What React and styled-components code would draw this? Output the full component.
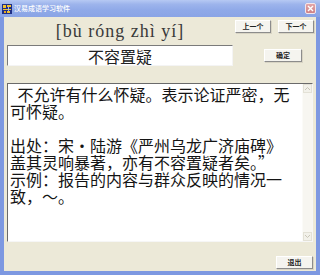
import React from 'react';
import styled, { createGlobalStyle } from 'styled-components';

const Global = createGlobalStyle`
  html, body { margin: 0; padding: 0; background: #ffffff; }
  body { width: 320px; height: 275px; overflow: hidden; }
`;

const Win = styled.div`
  width: 320px;
  height: 275px;
  box-sizing: border-box;
  display: flex;
  flex-direction: column;
  background: #7d98e1;
  font-family: "Noto Sans CJK SC", "Noto Sans", sans-serif;
`;

const TitleBar = styled.div`
  height: 17px;
  flex: none;
  display: flex;
  align-items: center;
  gap: 2px;
  padding: 0 4px 0 2px;
  background: linear-gradient(to bottom, #b6c9f3 0%, #9db4ec 25%, #8fa9e8 60%, #8aa4e5 100%);
`;

const TitleText = styled.span`
  flex: 1;
  color: #ffffff;
  font-size: 7px;
  line-height: 9px;
  font-weight: 500;
`;

const CloseBtn = styled.div`
  width: 11px;
  height: 11px;
  box-sizing: border-box;
  border: 1px solid #f4e6ea;
  border-radius: 2px;
  background: linear-gradient(to bottom, #e2a5a8, #cf8287);
  display: flex;
  align-items: center;
  justify-content: center;
`;

const Body = styled.div`
  flex: 1;
  margin: 0 4px 4px 4px;
  background: #ece9d8;
  display: flex;
  flex-direction: column;
  padding: 3px 3px 2px 3px;
`;

const Top = styled.div`
  display: grid;
  grid-template-columns: 226px 1fr;
  column-gap: 2px;
`;

const LeftCol = styled.div`
  display: flex;
  flex-direction: column;
  gap: 3px;
`;

const Pinyin = styled.div`
  height: 22px;
  line-height: 22px;
  text-align: center;
  font-family: "Liberation Serif", "DejaVu Serif", serif;
  font-size: 18px;
  letter-spacing: 1px;
  color: #3a3a3a;
`;

const WordBox = styled.div`
  height: 21px;
  box-sizing: border-box;
  background: #ffffff;
  border: 1px solid;
  border-color: #7a7a7a #f4f4f4 #f4f4f4 #7a7a7a;
  display: flex;
  align-items: center;
  justify-content: center;
  font-size: 16px;
  color: #222222;
  line-height: 1;
`;

const RightCol = styled.div`
  display: flex;
  flex-direction: column;
  gap: 16px;
`;

const BtnRow = styled.div`
  display: flex;
  gap: 7px;
`;

const Button = styled.div`
  width: ${p => p.$w || 36}px;
  height: 13px;
  box-sizing: border-box;
  margin-left: ${p => p.$ml || 0}px;
  background: #f5f4ef;
  border: 1px solid;
  border-color: #ffffff #8c8c8c #8c8c8c #ffffff;
  box-shadow: 1px 1px 0 #d8d4c4;
  display: flex;
  align-items: center;
  justify-content: center;
  font-size: 7px;
  line-height: 1;
  color: #222222;
  font-weight: 700;
`;

const TextBox = styled.div`
  margin-top: 17px;
  height: 159px;
  box-sizing: border-box;
  display: flex;
  background: #ffffff;
  border: 1px solid;
  border-color: #6a6a6a #f6f6f6 #f6f6f6 #6a6a6a;
`;

const Content = styled.div`
  flex: 1;
  min-width: 0;
  padding: 2px 0 0 2px;
  font-size: 16px;
  line-height: 17px;
  color: #141414;
`;

const Line = styled.div`
  min-height: 17px;
  white-space: pre;
  word-spacing: 4px;
`;

const Dot = styled.span`
  font-feature-settings: "fwid" 1;
`;

const ScrollBar = styled.div`
  width: 9px;
  flex: none;
  display: flex;
  flex-direction: column;
  background: #f7f6f1;
  border-left: 1px solid #fbfbf8;
`;

const Arrow = styled.div`
  height: 9px;
  box-sizing: border-box;
  border: 1px solid #e3e1d6;
  background: #f2f1ea;
  display: flex;
  align-items: center;
  justify-content: center;
`;

const Track = styled.div`
  flex: 1;
`;

const Footer = styled.div`
  margin-top: 14px;
  display: flex;
  justify-content: flex-end;
`;

const AppIcon = () => (
  <svg width="10" height="10" viewBox="0 0 10 10">
    <rect x="0" y="0" width="10" height="10" fill="#1f2f86" />
    <rect x="1" y="1" width="3" height="3" fill="#f2c230" />
    <rect x="5" y="1" width="4" height="2" fill="#f2c230" />
    <rect x="1" y="5" width="8" height="1" fill="#f2c230" />
    <rect x="2" y="7" width="2" height="2" fill="#e8a820" />
    <rect x="5" y="7" width="3" height="2" fill="#f2c230" />
    <rect x="6" y="3" width="1" height="4" fill="#9fb3f0" />
  </svg>
);

const CloseX = () => (
  <svg width="7" height="7" viewBox="0 0 7 7">
    <path d="M1 1 L6 6 M6 1 L1 6" stroke="#ffffff" strokeWidth="1.4" />
  </svg>
);

const ArrowGlyph = ({ up }) => (
  <svg width="5" height="3" viewBox="0 0 5 3">
    <path d={up ? 'M0 3 L2.5 0.5 L5 3' : 'M0 0 L2.5 2.5 L5 0'} stroke="#c9c6b8" strokeWidth="1" fill="none" />
  </svg>
);

export default function App() {
  return (
    <>
      <Global />
      <Win>
        <TitleBar>
          <AppIcon />
          <TitleText>汉易成语学习软件</TitleText>
          <CloseBtn><CloseX /></CloseBtn>
        </TitleBar>
        <Body>
          <Top>
            <LeftCol>
              <Pinyin>[bù róng zhì yí]</Pinyin>
              <WordBox>不容置疑</WordBox>
            </LeftCol>
            <RightCol>
              <BtnRow>
                <Button>上一个</Button>
                <Button>下一个</Button>
              </BtnRow>
              <Button $w={38} $ml={29}>确定</Button>
            </RightCol>
          </Top>
          <TextBox>
            <Content>
              <Line> 不允许有什么怀疑。表示论证严密，无</Line>
              <Line>可怀疑。</Line>
              <Line />
              <Line>出处：宋<Dot>·</Dot>陆游《严州乌龙广济庙碑》</Line>
              <Line>盖其灵响暴著，亦有不容置疑者矣。”</Line>
              <Line>示例：报告的内容与群众反映的情况一</Line>
              <Line>致，～。</Line>
            </Content>
            <ScrollBar>
              <Arrow><ArrowGlyph up /></Arrow>
              <Track />
              <Arrow><ArrowGlyph /></Arrow>
            </ScrollBar>
          </TextBox>
          <Footer>
            <Button $w={37}>退出</Button>
          </Footer>
        </Body>
      </Win>
    </>
  );
}
